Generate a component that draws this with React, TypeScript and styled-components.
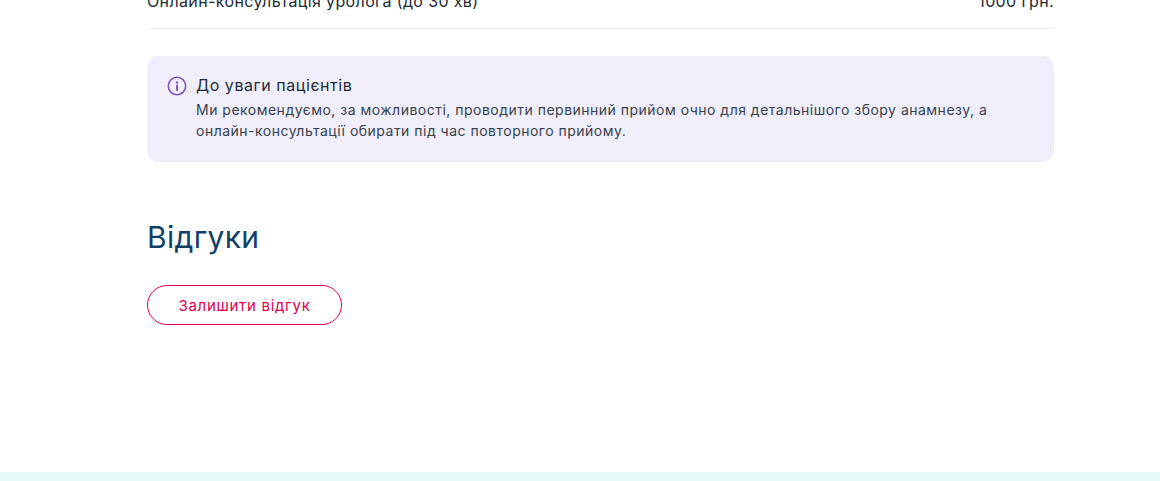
import React from "react";
import styled, { createGlobalStyle } from "styled-components";

const GlobalStyle = createGlobalStyle`
	html, body {
		margin: 0;
		padding: 0;
		height: 481px;
		overflow: hidden;
		background: #fff;
	}
	body {
		font-family: Inter, "Open Sans", sans-serif;
		color: #212b36;
	}
`;

const Page = styled.div`
	display: flex;
	flex-direction: column;
	height: 481px;
	overflow: hidden;
`;

const Content = styled.main`
	flex: 1;
	width: 907px;
	margin-left: 147px;
`;

const PriceRow = styled.div`
	display: flex;
	justify-content: space-between;
	height: 37px;
	margin-top: -9px;
	border-bottom: 1px solid #eeeff1;
	font-size: 16px;
	line-height: 20px;
	letter-spacing: 0.37px;
	color: #212b36;
`;

const Notice = styled.section`
	display: flex;
	gap: 9px;
	height: 106px;
	box-sizing: border-box;
	margin-top: 27px;
	padding: 20px 20px 0;
	background: #f0eefb;
	border-radius: 12px;
`;

const InfoIcon = styled.svg`
	flex: none;
	width: 20px;
	height: 20px;
`;

const NoticeBody = styled.div`
	display: flex;
	flex-direction: column;
	margin-top: -1px;
`;

const NoticeTitle = styled.h4`
	margin: 0 0 4px;
	font-size: 16px;
	font-weight: 400;
	line-height: 20px;
	letter-spacing: 0.55px;
	color: #212b36;
`;

const NoticeText = styled.p`
	margin: 0;
	font-size: 14px;
	font-weight: 400;
	line-height: 21px;
	letter-spacing: 0.49px;
	color: #37414c;
`;

const Heading = styled.h2`
	margin: 57px 0 0;
	font-size: 30px;
	font-weight: 400;
	line-height: 36px;
	letter-spacing: 0.3px;
	color: #104068;
`;

const OutlineButton = styled.button`
	display: block;
	width: 195px;
	height: 40px;
	margin-top: 30px;
	padding: 0;
	background: #fff;
	border: 1px solid #e0004d;
	border-radius: 20px;
	font-family: inherit;
	font-size: 15px;
	font-weight: 400;
	letter-spacing: 0.7px;
	color: #e0004d;
`;

const Footer = styled.footer`
	flex: none;
	height: 9px;
	background: #e8faf7;
`;

export default function App() {
	return (
		<Page>
			<GlobalStyle />
			<Content>
				<PriceRow>
					<span>Онлайн-консультація уролога (до 30 хв)</span>
					<span>1000 грн.</span>
				</PriceRow>
				<Notice>
					<InfoIcon viewBox="0 0 20 20" fill="none">
						<circle cx="10" cy="10" r="8.7" stroke="#7e57c2" strokeWidth="1.6" />
						<circle cx="10" cy="6.5" r="1.2" fill="#7e57c2" />
						<path d="M10 9.6v4.4" stroke="#7e57c2" strokeWidth="2" strokeLinecap="round" />
					</InfoIcon>
					<NoticeBody>
						<NoticeTitle>До уваги пацієнтів</NoticeTitle>
						<NoticeText>
							Ми рекомендуємо, за можливості, проводити первинний прийом очно для детальнішого збору анамнезу, а
							<br />
							онлайн-консультації обирати під час повторного прийому.
						</NoticeText>
					</NoticeBody>
				</Notice>
				<Heading>Відгуки</Heading>
				<OutlineButton>Залишити відгук</OutlineButton>
			</Content>
			<Footer />
		</Page>
	);
}
